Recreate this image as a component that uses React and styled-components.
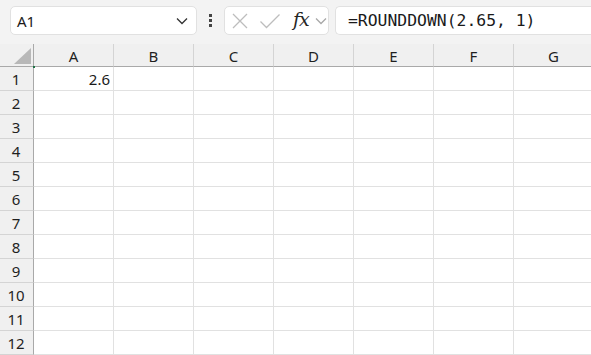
import React from "react";
import styled, { createGlobalStyle } from "styled-components";

const Global = createGlobalStyle`
  html, body { margin: 0; padding: 0; background: #ffffff; }
  body { font-family: "Noto Sans", "Open Sans", sans-serif; }
`;

const Page = styled.div`
  width: 591px;
  height: 355px;
  overflow: hidden;
  background: #ffffff;
`;

const Toolbar = styled.div`
  height: 44px;
  box-sizing: border-box;
  background: #f3f3f3;
  display: flex;
  align-items: flex-start;
  padding: 6px 0 0 10px;
  white-space: nowrap;
`;

const Box = styled.div`
  box-sizing: border-box;
  height: 29px;
  background: #ffffff;
  border: 1px solid #e1e1e1;
  border-radius: 5px;
  display: flex;
  align-items: center;
  flex: none;
  width: ${(p) => p.$w}px;
`;

const NameBox = styled(Box)`
  padding: 0 8px 0 6px;
  justify-content: space-between;
`;

const NameText = styled.span`
  font-family: "Noto Sans", sans-serif;
  font-size: 15px;
  color: #1a1a1a;
`;

const Dots = styled.div`
  width: 27px;
  height: 29px;
  display: flex;
  flex-direction: column;
  align-items: center;
  justify-content: center;
  gap: 2px;
  flex: none;
`;

const Dot = styled.span`
  width: 3px;
  height: 3px;
  background: #444;
`;

const FxBox = styled(Box)`
  padding: 0 0 0 6px;
  gap: 0;
`;

const Fx = styled.span`
  font-family: "DejaVu Serif", "Liberation Serif", serif;
  font-style: italic;
  font-size: 19px;
  font-weight: 500;
  color: #262626;
  margin: -3px 6px 0 12px;
  letter-spacing: -1px;
`;

const FormulaBox = styled(Box)`
  margin-left: 6px;
  padding-left: 12px;
  border-right: none;
  border-radius: 5px 0 0 5px;
`;

const FormulaText = styled.span`
  font-family: "DejaVu Sans Mono", "Liberation Mono", monospace;
  font-size: 16.4px;
  color: #1a1a1a;
`;

const Grid = styled.div`
  position: relative;
  display: grid;
  grid-template-columns: 34px repeat(7, 80px);
  grid-template-rows: 23px repeat(12, 24px);
`;

const Cell = styled.div`
  box-sizing: border-box;
  border-right: 1px solid #e1e1e1;
  border-bottom: 1px solid #e1e1e1;
  font-size: 15px;
  color: #1a1a1a;
  display: flex;
  align-items: center;
  justify-content: ${(p) => (p.$num ? "flex-end" : "flex-start")};
  padding: 0 3px;
  font-family: "Noto Sans", sans-serif;
`;

const ColHead = styled.div`
  box-sizing: border-box;
  background: #f0f0f0;
  border-right: 1px solid #d4d4d4;
  border-bottom: 1px solid #a9a9a9;
  display: flex;
  align-items: center;
  justify-content: center;
  font-size: 15px;
  color: #1f1f1f;
  padding-top: 1px;
`;

const Corner = styled(ColHead)`
  border-right: 1px solid #a9a9a9;
  align-items: flex-end;
  justify-content: flex-end;
  padding: 0 2px 2px 0;
`;

const RowHead = styled.div`
  box-sizing: border-box;
  background: #f0f0f0;
  border-right: 1px solid #a9a9a9;
  border-bottom: 1px solid #d4d4d4;
  display: flex;
  align-items: center;
  justify-content: center;
  font-size: 15px;
  color: #1f1f1f;
  padding-right: 1px;
`;

const GreenDot = styled.span`
  position: absolute;
  left: 33px;
  top: 22px;
  width: 2px;
  height: 2px;
  background: #1e7145;
`;

const Chevron = ({ color }) => (
  <svg width="12" height="8" viewBox="0 0 12 8">
    <path d="M1 1.5 L6 6.5 L11 1.5" fill="none" stroke={color} strokeWidth="1.3" />
  </svg>
);

const cols = ["A", "B", "C", "D", "E", "F", "G"];
const rows = Array.from({ length: 12 }, (_, i) => i + 1);

export default function App() {
  return (
    <Page>
      <Global />
      <Toolbar>
        <NameBox $w={187}>
          <NameText>A1</NameText>
          <Chevron color="#333" />
        </NameBox>
        <Dots>
          <Dot />
          <Dot />
          <Dot />
        </Dots>
        <FxBox $w={105}>
          <svg width="18" height="18" viewBox="0 0 18 18">
            <path d="M2 2 L16 16 M16 2 L2 16" stroke="#bdbdbd" strokeWidth="1.3" fill="none" />
          </svg>
          <svg width="22" height="18" viewBox="0 0 22 18" style={{ marginLeft: 10 }}>
            <path d="M1.5 9.5 L7.5 15.5 L20.5 2.5" stroke="#bdbdbd" strokeWidth="1.3" fill="none" />
          </svg>
          <Fx>fx</Fx>
          <Chevron color="#a8a8a8" />
        </FxBox>
        <FormulaBox $w={262}>
          <FormulaText>=ROUNDDOWN(2.65, 1)</FormulaText>
        </FormulaBox>
      </Toolbar>
      <Grid>
        <Corner>
          <svg width="17" height="16" viewBox="0 0 17 16">
            <polygon points="17,0 17,16 0,16" fill="#b8b8b8" />
          </svg>
        </Corner>
        {cols.map((c) => (
          <ColHead key={c}>{c}</ColHead>
        ))}
        {rows.map((r) => (
          <React.Fragment key={r}>
            <RowHead>{r}</RowHead>
            {cols.map((c) => (
              <Cell key={c} $num={r === 1 && c === "A"}>
                {r === 1 && c === "A" ? "2.6" : ""}
              </Cell>
            ))}
          </React.Fragment>
        ))}
        <GreenDot />
      </Grid>
    </Page>
  );
}
